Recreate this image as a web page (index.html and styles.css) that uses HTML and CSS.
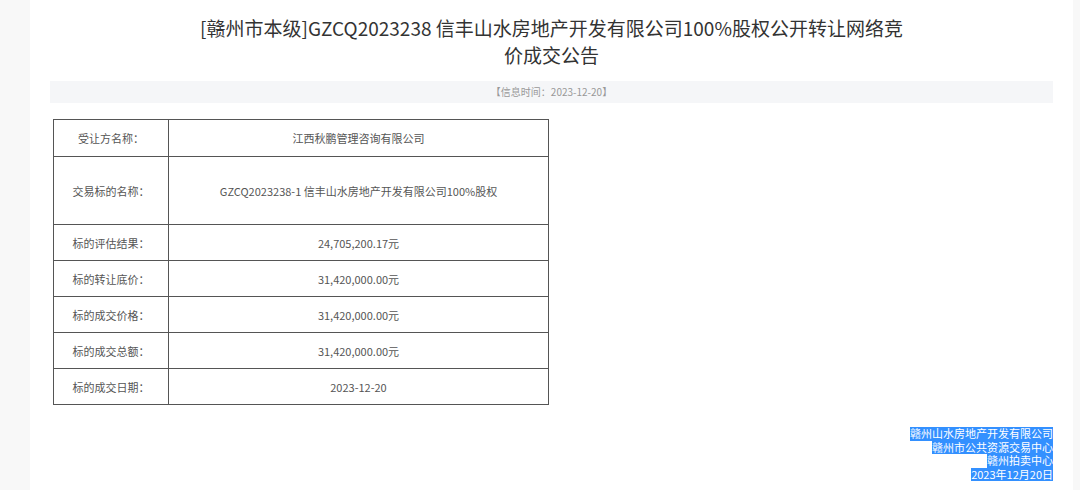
FILE: index.html
```html
<!DOCTYPE html>
<html lang="zh-CN">
<head>
<meta charset="utf-8">
<link rel="stylesheet" href="styles.css">
</head>
<body>
<div class="panel">
  <h1 class="title">[赣州市本级]GZCQ2023238 信丰山水房地产开发有限公司100%股权公开转让网络竞价成交公告</h1>
  <div class="info">【信息时间：2023-12-20】</div>
  <table class="deal">
    <tr><td class="label">受让方名称：</td><td class="value">江西秋鹏管理咨询有限公司</td></tr>
    <tr class="tall"><td class="label">交易标的名称：</td><td class="value">GZCQ2023238-1 信丰山水房地产开发有限公司100%股权</td></tr>
    <tr><td class="label">标的评估结果：</td><td class="value">24,705,200.17元</td></tr>
    <tr><td class="label">标的转让底价：</td><td class="value">31,420,000.00元</td></tr>
    <tr><td class="label">标的成交价格：</td><td class="value">31,420,000.00元</td></tr>
    <tr><td class="label">标的成交总额：</td><td class="value">31,420,000.00元</td></tr>
    <tr><td class="label">标的成交日期：</td><td class="value">2023-12-20</td></tr>
  </table>
  <div class="sign">
    <span class="hl">赣州山水房地产开发有限公司</span>
    <span class="hl">赣州市公共资源交易中心</span>
    <span class="hl">赣州拍卖中心</span>
    <span class="hl">2023年12月20日</span>
  </div>
</div>
</body>
</html>
```
FILE: styles.css
```css
html, body {
  margin: 0;
  padding: 0;
  background: #f8f8f8;
  font-family: "Noto Sans CJK SC", "Noto Sans", sans-serif;
  color: #333;
}
.panel {
  margin: 0 7px 0 30px;
  background: #fff;
  height: 490px;
  padding: 14px 20px 0 20px;
  box-sizing: border-box;
  overflow: hidden;
}
.title {
  margin: 0;
  padding: 0 145px;
  font-size: 19px;
  line-height: 27px;
  font-weight: normal;
  text-align: center;
  color: #333;
}
.info {
  margin-top: 13px;
  height: 22px;
  line-height: 22px;
  background: #f5f6f8;
  text-align: center;
  font-size: 10px;
  color: #999;
}
.deal {
  margin: 16px 0 0 3px;
  width: 496px;
  border-collapse: collapse;
  font-size: 11px;
  color: #555;
}
.deal td {
  border: 1px solid #555;
  text-align: center;
  height: 35px;
  padding: 0;
}
.deal .label {
  width: 114px;
}
.deal tr:first-child td {
  height: 36px;
}
.deal tr.tall td {
  height: 67px;
}
.sign {
  margin-top: 22px;
  display: flex;
  flex-direction: column;
  align-items: flex-end;
  font-size: 11px;
}
.hl {
  display: block;
  height: 13.5px;
  line-height: 13.5px;
  background: #3390ff;
  color: #fff;
  white-space: nowrap;
}
```
